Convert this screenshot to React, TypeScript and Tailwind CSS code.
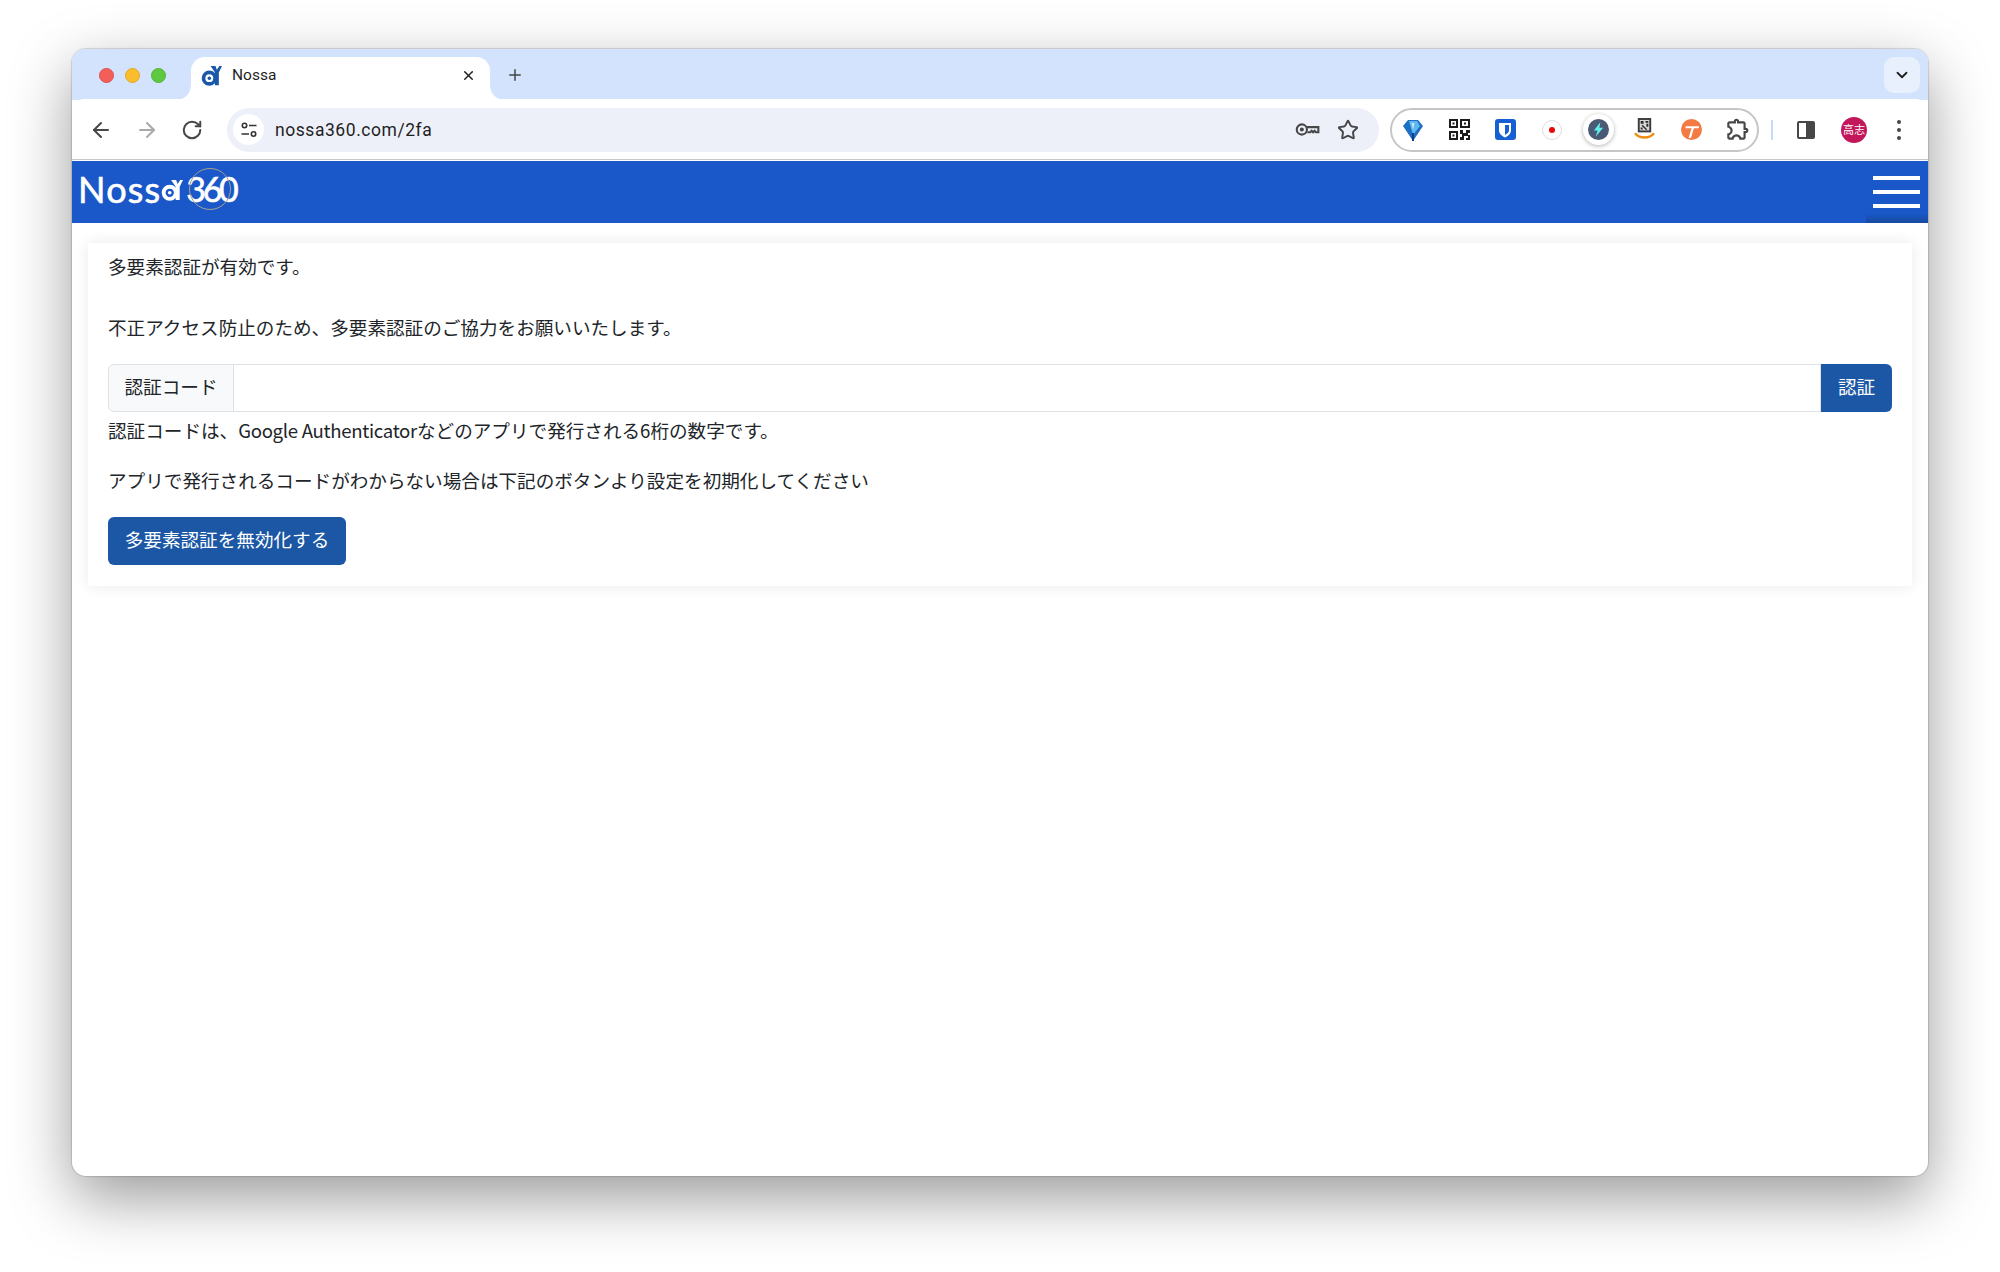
import { ArrowLeft, ArrowRight, ChevronDown, Plus, RotateCw, Star, X } from "lucide-react";

const jp = "font-['Noto_Sans_CJK_JP','Noto_Sans',sans-serif]";

function NossaMark({ className, color }: { className: string; color: string }) {
  return (
    <svg viewBox="0 0 24 24" className={className} fill="none">
      <circle cx="9.5" cy="15" r="6.6" stroke={color} strokeWidth="4.2" />
      <circle cx="9.500" cy="15" r="2" fill={color} />
      <path d="M11 1h5.500l1.600 4.500L21 1h3l-3.600 7.500V23h-4.400V8.500z" fill={color} />
    </svg>
  );
}

function Flare({ side }: { side: "left" | "right" }) {
  return (
    <svg
      viewBox="0 0 16 16"
      className={side === "left" ? "absolute bottom-0 left-[-16px] w-4 h-4" : "absolute bottom-0 right-[-16px] w-4 h-4"}
    >
      {side === "left" ? <path d="M16 0C16 10 10 16 0 16H16Z" fill="#fff" /> : <path d="M0 0C0 10 6 16 16 16H0Z" fill="#fff" />}
    </svg>
  );
}

function ExtSlot({ children }: { children: React.ReactNode }) {
  return <div className="w-[46.4px] h-full flex items-center justify-center shrink-0">{children}</div>;
}

function QrIcon() {
  return (
    <svg viewBox="0 0 21 21" className="w-[21px] h-[21px]" fill="#1c1c1c">
      <path fillRule="evenodd" d="M0 0h9v9H0zM2 2v5h5V2zM11 0h10v9H11zM13 2v5h6V2zM0 12h9v9H0zM2 14v5h5v-5z" />
      <rect x="3.500" y="3.500" width="2" height="2" />
      <rect x="15" y="3.500" width="2" height="2" />
      <rect x="3.500" y="15.500" width="2" height="2" />
      <path d="M11 11h3v3h3v-3h4v3h-2v2h2v5h-4v-2h2v-2h-4v4h-4v-3h2v-3h-2z" />
    </svg>
  );
}

export default function App() {
  return (
    <div className="w-[2000px] h-[1272px] bg-white pl-[72px] pt-[49px] overflow-hidden">
      <div className="w-[1856px] h-[1127px] rounded-[14px] bg-white shadow-[0_22px_62px_rgba(0,0,0,0.4),0_0_1px_1px_rgba(0,0,0,0.14)] overflow-hidden flex flex-col font-['Inter','Noto_Sans',sans-serif]">
        {/* Tab strip */}
        <div className="h-[51px] bg-[#d3e3fd] flex shrink-0 pt-2">
          <div className="w-[119px] h-[36px] flex items-center gap-[11px] pl-[27px] shrink-0">
            <span className="w-[15px] h-[15px] rounded-full bg-[#f25f58] border border-[#de4f48]" />
            <span className="w-[15px] h-[15px] rounded-full bg-[#fbbc2e] border border-[#e3a822]" />
            <span className="w-[15px] h-[15px] rounded-full bg-[#5dc840] border border-[#4fb534]" />
          </div>
          <div className="relative w-[299px] h-[43px] bg-white rounded-t-[14px] flex items-center pl-[10px] pr-[14px] pb-[6px] shrink-0">
            <Flare side="left" />
            <Flare side="right" />
            <NossaMark className="w-[21px] h-[21px] shrink-0" color="#1b57a9" />
            <span className="ml-[10px] text-[15.5px] text-[#1f1f1f] font-['Roboto',sans-serif] flex-1">Nossa</span>
            <X className="w-[15px] h-[15px] text-[#1f1f1f]" strokeWidth={2.4} />
          </div>
          <div className="ml-[16px] w-[18px] h-[36px] flex items-center justify-center">
            <Plus className="w-[18px] h-[18px] text-[#444746]" strokeWidth={2} />
          </div>
          <div className="ml-auto mr-2 w-9 h-9 rounded-[10px] bg-[#e9f0fd] flex items-center justify-center">
            <ChevronDown className="w-[18px] h-[18px] text-[#1f1f1f]" strokeWidth={2.4} />
          </div>
        </div>

        {/* Toolbar */}
        <div className="h-[61px] bg-white rounded-t-[12px] -mt-px flex items-center shrink-0 relative border-b border-[#c7c7c7] mb-px">
          <div className="w-[155px] flex items-center pl-[17px] gap-[22px] shrink-0 mt-px">
            <ArrowLeft className="w-6 h-6 text-[#474747]" strokeWidth={2} />
            <ArrowRight className="w-6 h-6 text-[#a9a9a9]" strokeWidth={2} />
            <RotateCw className="w-[22px] h-[22px] text-[#474747]" strokeWidth={2.2} />
          </div>
          <div className="w-[1152px] h-[44px] rounded-full bg-[#edf0f9] flex items-center pl-[6px] pr-[20px] shrink-0 mt-px">
            <div className="w-[31px] h-[31px] rounded-full bg-white flex items-center justify-center shrink-0">
              <svg viewBox="0 0 18 18" className="w-[18px] h-[18px]" fill="none" stroke="#333" strokeWidth="1.6">
                <circle cx="4.500" cy="4.500" r="2.200" />
                <path d="M9 4.500h7.500M1.500 13H9" />
                <circle cx="13.500" cy="13" r="2.200" />
              </svg>
            </div>
            <span className="ml-[11px] pt-px text-[17.5px] text-[#1f1f1f] flex-1 font-['Roboto',sans-serif] tracking-[0.55px]">nossa360.com/2fa</span>
            <svg viewBox="0 0 26 18" className="w-[25px] h-[17px] mr-[17px]" fill="none" stroke="#474747" strokeWidth="2.200">
              <circle cx="7" cy="9" r="5.400" />
              <circle cx="7" cy="9" r="1.100" fill="#474747" />
              <path d="M12.500 6.500h12V12h-2.500l-1.500-1.700-1.600 1.700-1.600-1.700-1.500 1.700h-3" />
            </svg>
            <Star className="w-[22px] h-[22px] text-[#474747]" strokeWidth={2.1} />
          </div>
          <div className="ml-[11px] w-[369px] h-[44px] rounded-full border-2 border-[#c4c7c5] flex items-center pr-[4px] shrink-0 mt-px">
            <div className="flex items-center h-full -ml-[2.5px]">
              <ExtSlot>
                <svg viewBox="0 0 20 24" className="w-[20px] h-[24px]">
                  <path d="M5 2h10l5 6-10 15L0 8z" fill="#1c6fc4" />
                  <path d="M6 3h8l3 5-7 9z" fill="#5fb7ee" />
                  <path d="M8.500 5h3L10 12z" fill="#bfe6fb" />
                  <path d="M9 15h2v8H9z" fill="#0d3f80" />
                </svg>
              </ExtSlot>
              <ExtSlot><QrIcon /></ExtSlot>
              <ExtSlot>
                <div className="w-[21px] h-[21px] rounded-[3px] bg-[#1660d4] flex items-center justify-center">
                  <svg viewBox="0 0 14 16" className="w-[14px] h-[16px]">
                    <path d="M1 1h12v7c0 4-3 6-6 7.500C4 14 1 12 1 8z" fill="#fff" />
                    <path d="M7 3h4v5c0 2.500-2 3.800-4 5z" fill="#1660d4" />
                  </svg>
                </div>
              </ExtSlot>
              <ExtSlot>
                <div className="w-[20px] h-[20px] rounded-full bg-white border border-[#dedede] flex items-center justify-center">
                  <span className="w-[6px] h-[6px] rounded-full bg-[#e20a0a]" />
                </div>
              </ExtSlot>
              <ExtSlot>
                <div className="w-[31px] h-[31px] rounded-full bg-white shadow-[0_1px_4px_rgba(0,0,0,0.3)] flex items-center justify-center">
                  <div className="w-[21px] h-[21px] rounded-full bg-[#4a5a74] flex items-center justify-center">
                    <svg viewBox="0 0 12 16" className="w-[11px] h-[15px]"><path d="M8 0 1 9h4l-2 7 8-10H7z" fill="#5ff0ee" /></svg>
                  </div>
                </div>
              </ExtSlot>
              <ExtSlot>
                <svg viewBox="0 0 22 24" className="w-[21px] h-[23px]">
                  <rect x="4" y="0" width="14" height="15" fill="#3a3a3a" />
                  <rect x="6" y="2" width="10" height="11" fill="#d8d8d8" />
                  <path d="M7 3h3v3H7zM12 3h3v2h-3zM9 7l5 5-1.500 .500L8 8zM7 10h2v2H7zM13 6h2v3h-2z" fill="#2a2a2a" />
                  <path d="M1 16c5 6 15 6 20 0" fill="none" stroke="#f08a12" strokeWidth="2.600" />
                </svg>
              </ExtSlot>
              <ExtSlot>
                <svg viewBox="0 0 22 22" className="w-[21px] h-[21px]">
                  <circle cx="11" cy="11" r="11" fill="#f47a44" />
                  <path d="M5 7.500h14l-.5 2.200H13.500L10.500 20H8l3-10.300H4.500z" fill="#fff" />
                </svg>
              </ExtSlot>
              <ExtSlot>
                <svg viewBox="0 -960 960 960" className="w-[26px] h-[26px]" fill="#474747">
                  <path d="M352-120H200q-33 0-56.500-23.500T120-200v-152q48 0 84-30.500t36-77.500q0-47-36-77.500T120-568v-152q0-33 23.500-56.500T200-800h160q0-42 29-71t71-29q42 0 71 29t29 71h160q33 0 56.500 23.500T800-720v160q42 0 71 29t29 71q0 42-29 71t-71 29v160q0 33-23.500 56.500T720-120H568q0-50-31.500-85T460-240q-45 0-76.500 35T352-120Zm-152-80h85q24-66 77-93t98-27q45 0 98 27t77 93h85v-240h80q8 0 14-6t6-14q0-8-6-14t-14-6h-80v-240H480v-80q0-8-6-14t-14-6q-8 0-14 6t-6 14v80H200v88q54 20 87 67t33 105q0 57-33 104t-87 68v88Z" />
                </svg>
              </ExtSlot>
            </div>
          </div>
          <div className="ml-[12px] w-[2px] h-[20px] bg-[#c8dafc] shrink-0 mt-px" />
          <div className="ml-[24px] w-[18px] h-[18px] border-2 border-[#474747] rounded-[2px] shrink-0 flex justify-end mt-px">
            <div className="w-[7px] h-full bg-[#474747]" />
          </div>
          <div className={`ml-[26px] w-[26px] h-[26px] rounded-full bg-[#c2185b] text-white text-[11px] flex items-center justify-center shrink-0 mt-px ${jp}`}>高志</div>
          <div className="ml-[30px] flex flex-col gap-[4px] shrink-0 mt-px">
            <span className="w-[4px] h-[4px] rounded-full bg-[#474747]" />
            <span className="w-[4px] h-[4px] rounded-full bg-[#474747]" />
            <span className="w-[4px] h-[4px] rounded-full bg-[#474747]" />
          </div>
        </div>

        {/* Page banner */}
        <div className="h-[62px] bg-[#1a58c9] flex items-center shrink-0 relative">
          <div className="ml-[6px] relative flex items-center text-white font-['Lato',sans-serif] text-[36px] leading-none h-full [-webkit-text-stroke:0.6px_white] pb-[6px]">
            <span className="tracking-[1.2px]">Noss</span>
            <NossaMark className="w-[22px] h-[28px] mt-[1px]" color="#fff" />
            <span className="ml-[3px] tracking-[-3.4px] text-[34px]">360</span>
            <span className="absolute left-[111px] top-[7px] w-[42px] h-[42px] rounded-full border border-[#a8a090]" />
          </div>
          <div className="ml-auto mr-2 w-[47px] flex flex-col gap-[10px]">
            <span className="h-[4px] bg-white" />
            <span className="h-[4px] bg-white" />
            <span className="h-[4px] bg-white" />
          </div>
          <div className="absolute right-0 bottom-0 w-[62px] h-[10px] bg-gradient-to-b from-[#1a58c9] to-[#174a9f]" />
        </div>

        {/* Content */}
        <div className="flex-1 px-4 pt-5">
          <div className={`h-[343px] bg-white shadow-[0_0_14px_rgba(0,0,0,0.09)] px-5 pt-[9px] text-[18.6px] leading-[28px] text-[#212529] ${jp}`}>
            <p>多要素認証が有効です。</p>
            <p className="mt-[33px]">不正アクセス防止のため、多要素認証のご協力をお願いいたします。</p>
            <div className="mt-[23px] flex h-[48px]">
              <div className="w-[126px] bg-[#f8f9fa] border border-[#dee2e6] rounded-l-[6px] flex items-center justify-center pb-[5px]">認証コード</div>
              <input className="flex-1 -ml-px border border-[#dee2e6] bg-white outline-none" />
              <button className="w-[71px] bg-[#1b57a4] text-white rounded-r-[6px] pb-[5px]">認証</button>
            </div>
            <p className="mt-[4px]">認証コードは、<span className="tracking-[-0.3px]">Google Authenticator</span>などのアプリで発行される6桁の数字です。</p>
            <p className="mt-[22px]">アプリで発行されるコードがわからない場合は下記のボタンより設定を初期化してください</p>
            <button className="mt-[23px] w-[238px] h-[48px] rounded-[6px] bg-[#1b57a4] text-white pb-[5px]">多要素認証を無効化する</button>
          </div>
        </div>
      </div>
    </div>
  );
}
